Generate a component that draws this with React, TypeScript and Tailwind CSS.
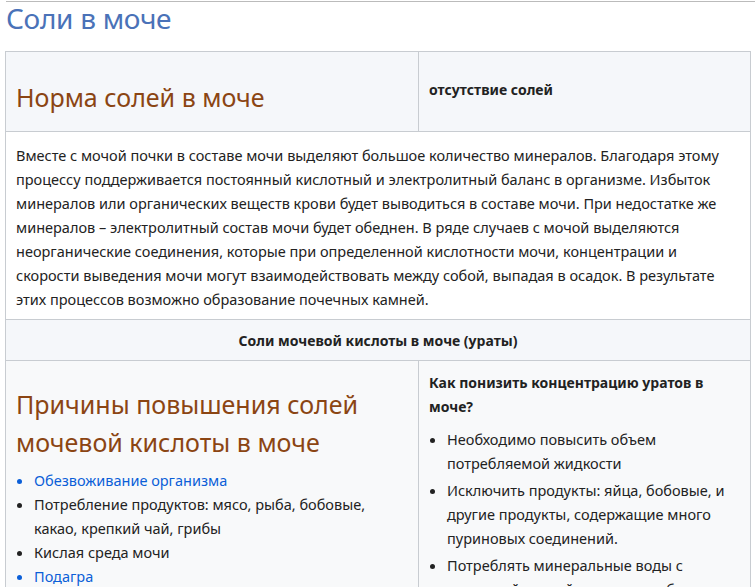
export default function App() {
  return (
    <div className="w-[755px] h-[587px] overflow-hidden bg-white text-[#222] font-[family-name:'Liberation_Sans',Arial,sans-serif] text-[14.5px]">
      <div className="border-t border-[#bbb] ml-[6px] mt-px" />
      <h1 className="text-[#4a72b8] text-[28px] leading-[32px] px-[6px] tracking-[-0.3px]">Соли в моче</h1>
      <table className="ml-[5px] mt-[17px] w-[746px] border-collapse border border-[#c8ccd1] table-fixed">
        <colgroup><col className="w-[413px]" /><col /></colgroup>
        <tbody>
          <tr className="bg-[#f5f7fa] h-[80px]">
            <td className="border border-[#c8ccd1] px-[10px] pt-[12px] align-middle">
              <div className="text-[#8b4513] text-[25px]">Норма солей в моче</div>
            </td>
            <td className="border border-[#c8ccd1] px-[10px] pb-[4px] align-middle font-bold text-[14px]">отсутствие солей</td>
          </tr>
          <tr>
            <td colSpan={2} className="border border-[#c8ccd1] px-[10px] pt-[11px] pb-[8px] leading-[24px]">
              Вместе с мочой почки в составе мочи выделяют большое количество минералов. Благодаря этому процессу поддерживается постоянный кислотный и электролитный баланс в организме. Избыток минералов или органических веществ крови будет выводиться в составе мочи. При недостатке же минералов – электролитный состав мочи будет обеднен. В ряде случаев с мочой выделяются неорганические соединения, которые при определенной кислотности мочи, концентрации и скорости выведения мочи могут взаимодействовать между собой, выпадая в осадок. В результате этих процессов возможно образование почечных камней.
            </td>
          </tr>
          <tr className="bg-[#f5f7fa] h-[41px]">
            <td colSpan={2} className="border border-[#c8ccd1] text-center font-bold text-[14px]">Соли мочевой кислоты в моче (ураты)</td>
          </tr>
          <tr className="bg-[#f8f9fa]">
            <td className="border border-[#c8ccd1] px-[10px] pt-[24px] align-top">
              <div className="text-[#8b4513] text-[25px] leading-[38px]">Причины повышения солей мочевой кислоты в моче</div>
              <ul className="list-disc pl-[18px] mt-[7px] leading-[24px]">
                <li className="text-[#0b5fd8]">Обезвоживание организма</li>
                <li>Потребление продуктов: мясо, рыба, бобовые, какао, крепкий чай, грибы</li>
                <li>Кислая среда мочи</li>
                <li className="text-[#0b5fd8]">Подагра</li>
                <li>Лейкоз</li>
              </ul>
            </td>
            <td className="border border-[#c8ccd1] px-[10px] pt-[10px] align-top">
              <div className="font-bold text-[14px] leading-[24px]">Как понизить концентрацию уратов в моче?</div>
              <ul className="list-disc pl-[18px] mt-[8px] leading-[24px] space-y-[3px]">
                <li>Необходимо повысить объем потребляемой жидкости</li>
                <li>Исключить продукты: яйца, бобовые, и другие продукты, содержащие много пуриновых соединений.</li>
                <li>Потреблять минеральные воды с щелочной средой – ессентуки, боржоми</li>
              </ul>
            </td>
          </tr>
        </tbody>
      </table>
    </div>
  );
}
